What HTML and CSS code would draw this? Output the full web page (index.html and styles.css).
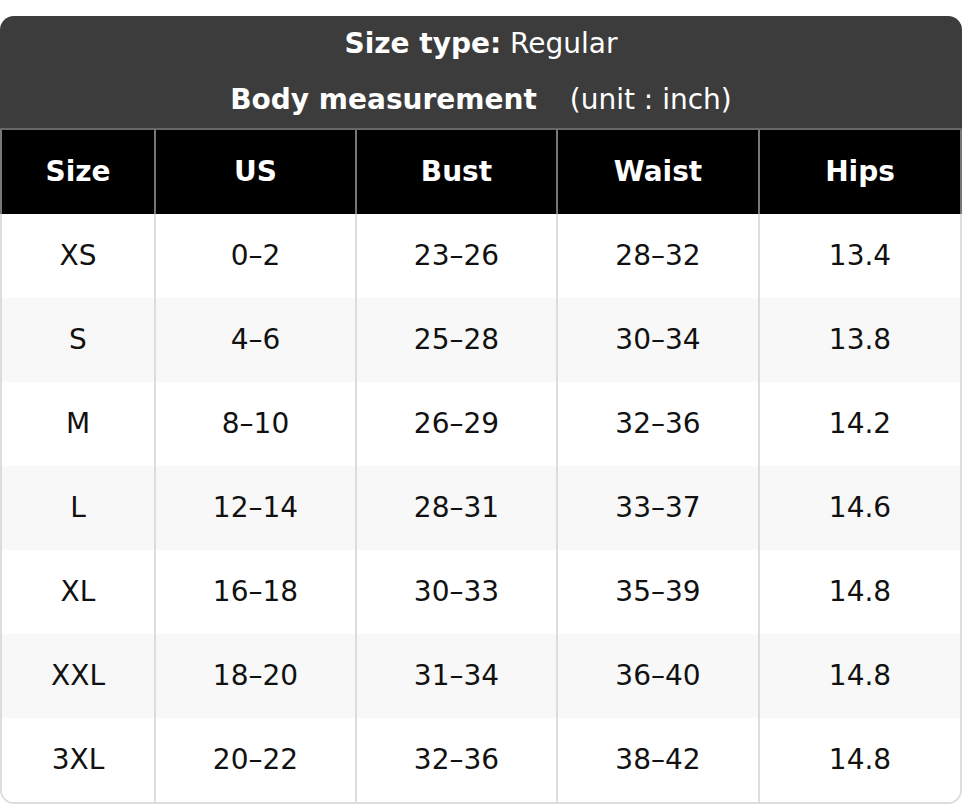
FILE: index.html
```html
<!DOCTYPE html>
<html>
<head>
<meta charset="utf-8">
<link rel="stylesheet" href="styles.css">
</head>
<body>
<div class="chart">
  <div class="title">
    <div class="title-line"><b>Size type:</b>&nbsp;Regular</div>
    <div class="title-line"><b>Body measurement</b><span class="unit">(unit : inch)</span></div>
  </div>
  <div class="grid head">
    <div class="cell">Size</div>
    <div class="cell">US</div>
    <div class="cell">Bust</div>
    <div class="cell">Waist</div>
    <div class="cell">Hips</div>
  </div>
  <div class="rows">
    <div class="grid row"><div class="cell">XS</div><div class="cell">0–2</div><div class="cell">23–26</div><div class="cell">28–32</div><div class="cell">13.4</div></div>
    <div class="grid row alt"><div class="cell">S</div><div class="cell">4–6</div><div class="cell">25–28</div><div class="cell">30–34</div><div class="cell">13.8</div></div>
    <div class="grid row"><div class="cell">M</div><div class="cell">8–10</div><div class="cell">26–29</div><div class="cell">32–36</div><div class="cell">14.2</div></div>
    <div class="grid row alt"><div class="cell">L</div><div class="cell">12–14</div><div class="cell">28–31</div><div class="cell">33–37</div><div class="cell">14.6</div></div>
    <div class="grid row"><div class="cell">XL</div><div class="cell">16–18</div><div class="cell">30–33</div><div class="cell">35–39</div><div class="cell">14.8</div></div>
    <div class="grid row alt"><div class="cell">XXL</div><div class="cell">18–20</div><div class="cell">31–34</div><div class="cell">36–40</div><div class="cell">14.8</div></div>
    <div class="grid row"><div class="cell">3XL</div><div class="cell">20–22</div><div class="cell">32–36</div><div class="cell">38–42</div><div class="cell">14.8</div></div>
  </div>
</div>
</body>
</html>
```
FILE: styles.css
```css
html, body {
  margin: 0;
  padding: 0;
  background: #fff;
}
body {
  font-family: "DejaVu Sans", Verdana, sans-serif;
  font-size: 28px;
  color: #111;
}
.chart {
  width: 962px;
  margin-top: 16px;
}
.title {
  background: #3c3c3c;
  color: #fff;
  border-radius: 14px 14px 0 0;
  border-bottom: 2px solid #676767;
}
.title-line {
  height: 56px;
  display: flex;
  align-items: center;
  justify-content: center;
  box-sizing: border-box;
  padding-bottom: 2px;
}
.title-line b {
  font-weight: bold;
}
.unit {
  margin-left: 33px;
}
.grid {
  display: grid;
  grid-template-columns: 154px 201px 201px 202px 1fr;
}
.head {
  background: #000;
  color: #fff;
  font-weight: bold;
  border-left: 2px solid #777;
  border-right: 2px solid #777;
}
.cell {
  height: 84px;
  display: flex;
  align-items: center;
  justify-content: center;
  border-right: 2px solid #ddd;
  box-sizing: border-box;
  padding-bottom: 1px;
}
.head .cell {
  border-right-color: #777;
}
.grid .cell:last-child {
  border-right: none;
}
.rows {
  border: 2px solid #ddd;
  border-top: none;
  border-radius: 0 0 14px 14px;
  overflow: hidden;
}
.row {
  background: #fff;
}
.row.alt {
  background: #f8f8f8;
}
```
